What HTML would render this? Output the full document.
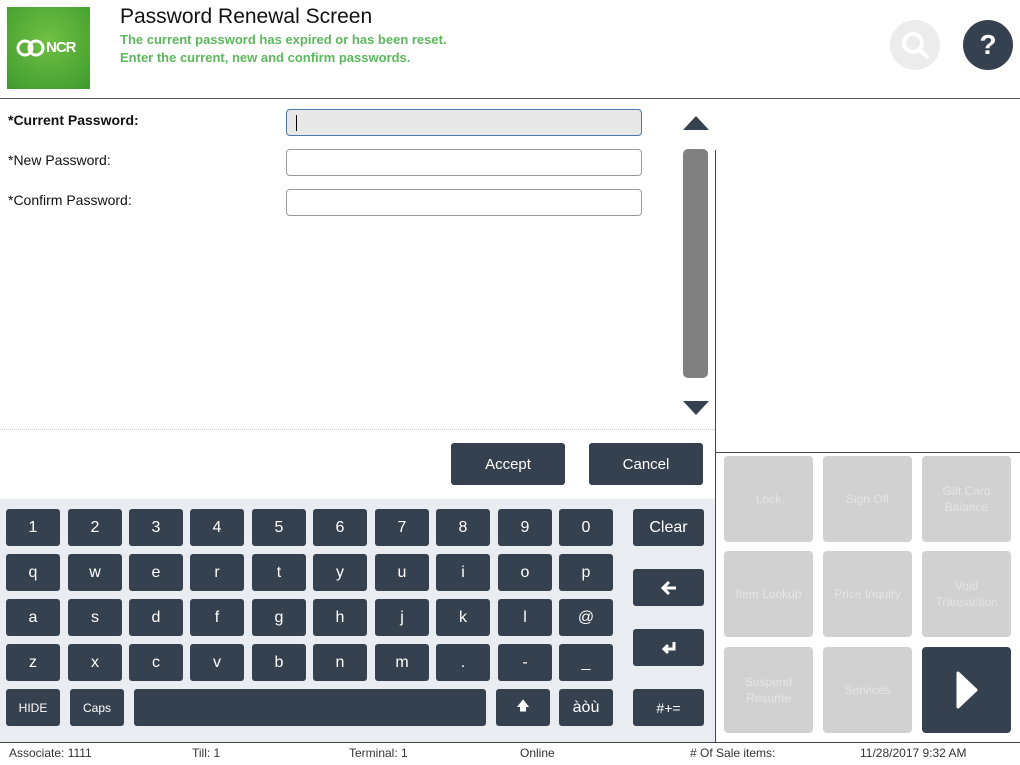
<!DOCTYPE html>
<html><head><meta charset="utf-8"><style>
*{margin:0;padding:0;box-sizing:border-box}
body{width:1020px;height:765px;position:relative;background:#fff;font-family:"Liberation Sans",sans-serif;overflow:hidden}
.a{position:absolute}
.k{position:absolute;background:#36414f;color:#fff;border-radius:3px;display:flex;align-items:center;justify-content:center;font-size:16px;width:54px;height:37px}
.g{position:absolute;background:#d1d1d1;border-radius:4px;width:89px;height:86px;color:#e4e4e4;font-size:12px;display:flex;align-items:center;justify-content:center;text-align:center;line-height:16px}
.lbl{position:absolute;left:8px;font-size:14px;color:#111}
.inp{position:absolute;left:286px;width:356px;height:27px;border:1px solid #999;border-radius:4px;background:#fff}
.ft{position:absolute;top:746px;font-size:12px;color:#333}
</style></head><body>
<div class="a" style="left:7px;top:7px;width:83px;height:82px;background:radial-gradient(circle at 50% 40%,#6fc043,#3f9a2e)"></div>
<div class="a" style="left:16px;top:38px;width:30px;height:20px">
<svg width="30" height="20"><circle cx="9" cy="10" r="7" fill="none" stroke="#fff" stroke-width="3"/><circle cx="20" cy="10" r="7" fill="none" stroke="#fff" stroke-width="3"/></svg></div>
<div class="a" style="left:46px;top:39px;color:#fff;font-weight:bold;font-size:15px;letter-spacing:-1px">NCR</div>
<div class="a" style="left:120px;top:5px;font-size:21px;color:#111">Password Renewal Screen</div>
<div class="a" style="left:120px;top:31px;font-size:13px;color:#5cb85c;font-weight:bold;line-height:18px">The current password has expired or has been reset.<br>Enter the current, new and confirm passwords.</div>
<div class="a" style="left:890px;top:20px;width:50px;height:50px;border-radius:50%;background:#ececec"><svg width="50" height="50"><circle cx="23" cy="23" r="9" fill="none" stroke="#fff" stroke-width="4"/><line x1="30" y1="30" x2="37" y2="37" stroke="#fff" stroke-width="4" stroke-linecap="round"/></svg></div>
<div class="a" style="left:963px;top:20px;width:50px;height:50px;border-radius:50%;background:#36414f;color:#fff;font-weight:bold;font-size:28px;text-align:center;line-height:50px">?</div>
<div class="a" style="left:0;top:98px;width:1020px;height:1px;background:#555"></div>

<div class="lbl" style="top:112px;font-weight:bold">*Current Password:</div>
<div class="lbl" style="top:152px">*New Password:</div>
<div class="lbl" style="top:192px">*Confirm Password:</div>
<div class="inp" style="top:109px;background:#e8e8e8;border-color:#4a78b0"><div class="a" style="left:9px;top:5px;width:1px;height:16px;background:#000"></div></div>
<div class="inp" style="top:149px"></div>
<div class="inp" style="top:189px"></div>

<div class="a" style="left:683px;top:116px;width:0;height:0;border-left:13px solid transparent;border-right:13px solid transparent;border-bottom:14px solid #36414f"></div>
<div class="a" style="left:683px;top:149px;width:25px;height:229px;background:#808080;border-radius:5px"></div>
<div class="a" style="left:683px;top:401px;width:0;height:0;border-left:13px solid transparent;border-right:13px solid transparent;border-top:14px solid #36414f"></div>
<div class="a" style="left:715px;top:150px;width:1px;height:592px;background:#444"></div>
<div class="a" style="left:715px;top:452px;width:305px;height:1px;background:#444"></div>
<div class="a" style="left:0;top:429px;width:715px;border-top:1px dotted #ccc"></div>

<div class="k" style="left:451px;top:443px;width:114px;height:42px;font-size:15px">Accept</div>
<div class="k" style="left:589px;top:443px;width:114px;height:42px;font-size:15px">Cancel</div>

<div class="a" style="left:0;top:499px;width:715px;height:243px;background:#e9edf1"></div>
<div class="k" style="left:6px;top:509px">1</div><div class="k" style="left:68px;top:509px">2</div><div class="k" style="left:129px;top:509px">3</div><div class="k" style="left:190px;top:509px">4</div><div class="k" style="left:252px;top:509px">5</div><div class="k" style="left:313px;top:509px">6</div><div class="k" style="left:375px;top:509px">7</div><div class="k" style="left:436px;top:509px">8</div><div class="k" style="left:498px;top:509px">9</div><div class="k" style="left:559px;top:509px">0</div>
<div class="k" style="left:6px;top:554px">q</div><div class="k" style="left:68px;top:554px">w</div><div class="k" style="left:129px;top:554px">e</div><div class="k" style="left:190px;top:554px">r</div><div class="k" style="left:252px;top:554px">t</div><div class="k" style="left:313px;top:554px">y</div><div class="k" style="left:375px;top:554px">u</div><div class="k" style="left:436px;top:554px">i</div><div class="k" style="left:498px;top:554px">o</div><div class="k" style="left:559px;top:554px">p</div>
<div class="k" style="left:6px;top:599px">a</div><div class="k" style="left:68px;top:599px">s</div><div class="k" style="left:129px;top:599px">d</div><div class="k" style="left:190px;top:599px">f</div><div class="k" style="left:252px;top:599px">g</div><div class="k" style="left:313px;top:599px">h</div><div class="k" style="left:375px;top:599px">j</div><div class="k" style="left:436px;top:599px">k</div><div class="k" style="left:498px;top:599px">l</div><div class="k" style="left:559px;top:599px">@</div>
<div class="k" style="left:6px;top:644px">z</div><div class="k" style="left:68px;top:644px">x</div><div class="k" style="left:129px;top:644px">c</div><div class="k" style="left:190px;top:644px">v</div><div class="k" style="left:252px;top:644px">b</div><div class="k" style="left:313px;top:644px">n</div><div class="k" style="left:375px;top:644px">m</div><div class="k" style="left:436px;top:644px">.</div><div class="k" style="left:498px;top:644px">-</div><div class="k" style="left:559px;top:644px">_</div>
<div class="k" style="left:6px;top:689px;font-size:12px">HIDE</div>
<div class="k" style="left:70px;top:689px;font-size:12px">Caps</div>
<div class="k" style="left:134px;top:689px;width:352px"></div>
<div class="k" style="left:496px;top:689px;font-size:13px">&#129093;</div>
<div class="k" style="left:559px;top:689px">àòù</div>
<div class="k" style="left:633px;top:509px;width:71px">Clear</div>
<div class="k" style="left:633px;top:569px;width:71px"><svg width="16" height="14"><path d="M8 1 L2 7 L8 13 M2 7 H15" stroke="#fff" stroke-width="3" fill="none"/></svg></div>
<div class="k" style="left:633px;top:629px;width:71px"><svg width="16" height="14"><path d="M13 1 V8 H4 M7 4 L3 8 L7 12" stroke="#fff" stroke-width="3" fill="none"/></svg></div>
<div class="k" style="left:633px;top:689px;width:71px;font-size:14px">#+=</div>

<div class="g" style="left:724px;top:456px">Lock</div>
<div class="g" style="left:823px;top:456px">Sign Off</div>
<div class="g" style="left:922px;top:456px">Gift Card<br>Balance</div>
<div class="g" style="left:724px;top:551px">Item Lookup</div>
<div class="g" style="left:823px;top:551px">Price Inquiry</div>
<div class="g" style="left:922px;top:551px">Void<br>Transaction</div>
<div class="g" style="left:724px;top:647px">Suspend<br>Resume</div>
<div class="g" style="left:823px;top:647px">Services</div>
<div class="g" style="left:922px;top:647px;background:#36414f"><svg width="22" height="38"><path d="M2 2 L20 19 L2 36 Z" fill="#fff" stroke="#fff" stroke-width="3" stroke-linejoin="round"/></svg></div>

<div class="a" style="left:0;top:742px;width:1020px;height:1px;background:#444"></div>
<div class="ft" style="left:9px">Associate: 1111</div>
<div class="ft" style="left:192px">Till: 1</div>
<div class="ft" style="left:349px">Terminal: 1</div>
<div class="ft" style="left:520px">Online</div>
<div class="ft" style="left:690px">#&nbsp;Of Sale items:</div>
<div class="ft" style="left:860px">11/28/2017 9:32 AM</div>
</body></html>
